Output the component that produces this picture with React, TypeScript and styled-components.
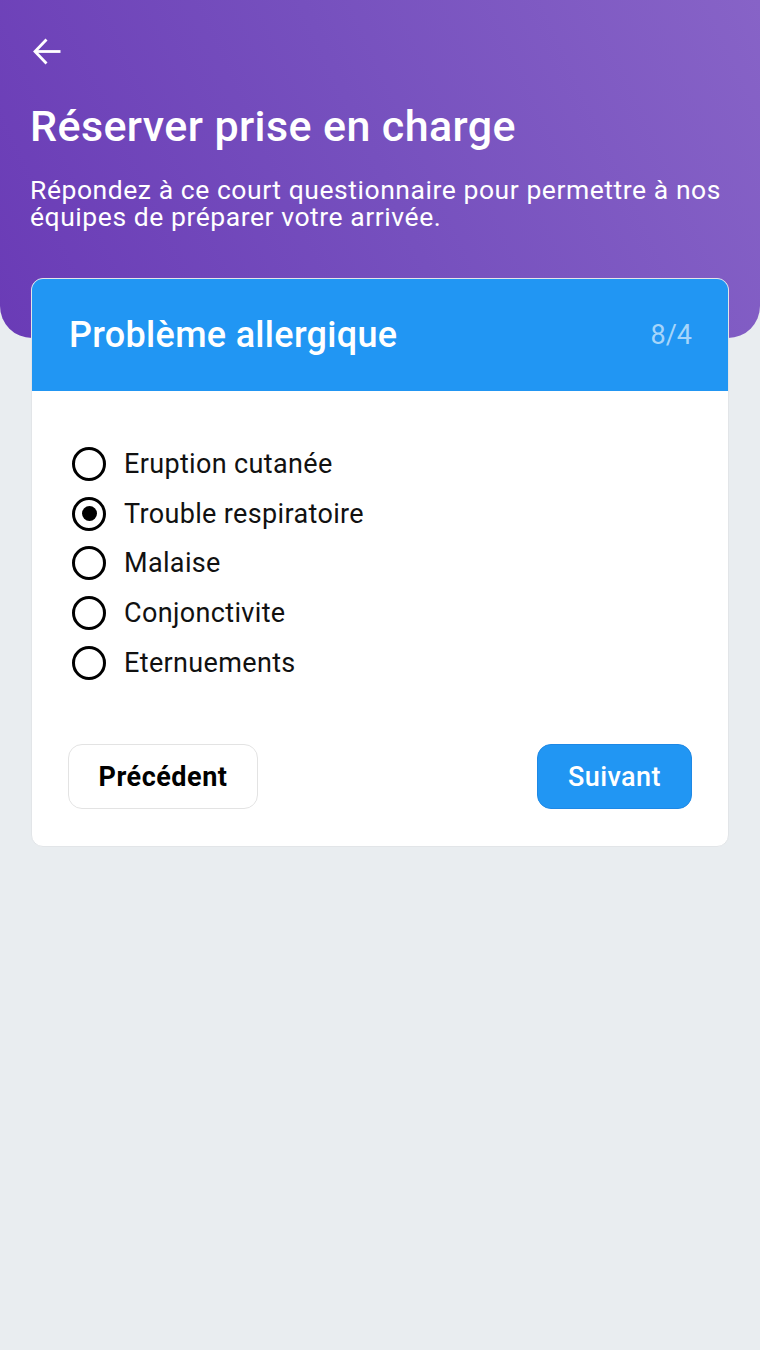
import styled, { createGlobalStyle } from 'styled-components';

const GlobalStyle = createGlobalStyle`
  body {
    margin: 0;
    background: #e9edf0;
    font-family: Roboto, "Noto Sans", sans-serif;
  }
  * {
    box-sizing: border-box;
  }
`

const options = [
  'Eruption cutanée',
  'Trouble respiratoire',
  'Malaise',
  'Conjonctivite',
  'Eternuements',
]

export default function App() {
  const selected = 1

  return (
    <>
      <GlobalStyle />
      <Page>
        <Header>
          <BackButton aria-label="Retour">
            <svg width="28" height="27" viewBox="0 0 28 27" fill="none">
              <polyline points="13.5,1.5 2,13.5 13.5,25.5" stroke="#fff" strokeWidth="2.8" />
              <line x1="2.5" y1="13.5" x2="27.5" y2="13.5" stroke="#fff" strokeWidth="2.8" />
            </svg>
          </BackButton>
          <Title>Réserver prise en charge</Title>
          <Subtitle>
            Répondez à ce court questionnaire pour permettre à nos équipes de préparer votre arrivée.
          </Subtitle>
        </Header>

        <Card>
          <CardHeader>
            <CardTitle>Problème allergique</CardTitle>
            <Step>8/4</Step>
          </CardHeader>
          <CardBody>
            <OptionList>
              {
                options.map((label, index) => {
                  return (
                    <OptionRow key={index}>
                      <Radio $checked={index === selected} />
                      <OptionLabel>{label}</OptionLabel>
                    </OptionRow>
                  )
                })
              }
            </OptionList>
            <Actions>
              <SecondaryButton>Précédent</SecondaryButton>
              <PrimaryButton>Suivant</PrimaryButton>
            </Actions>
          </CardBody>
        </Card>
      </Page>
    </>
  )
}

const Page = styled.div`
  min-height: 1350px;
  background: #e9edf0;
`

const Header = styled.header`
  height: 338px;
  padding: 38px 30px 0;
  border-radius: 0 0 32px 32px;
  background: linear-gradient(65deg, #6a3bb6 0%, #7650be 50%, #8763c7 100%);
  color: #fff;
`

const BackButton = styled.button`
  display: block;
  margin: 0 0 0 3px;
  padding: 0;
  border: none;
  background: none;
  height: 27px;
  cursor: pointer;

  svg {
    display: block;
  }
`

const Title = styled.h1`
  margin: 36px 0 0;
  font-size: 43px;
  line-height: 50px;
  font-weight: 500;
  letter-spacing: 0.4px;
`

const Subtitle = styled.p`
  margin: 25px 0 0;
  font-size: 26.5px;
  line-height: 27px;
  font-weight: 400;
  letter-spacing: 0.55px;
`

const Card = styled.section`
  margin: -60px 31px 0;
  background: #fff;
  border: 1px solid #e2e5e8;
  border-radius: 12px;
  overflow: hidden;
`

const CardHeader = styled.div`
  display: flex;
  align-items: center;
  justify-content: space-between;
  height: 112px;
  padding: 0 36px 0 37px;
  background: #2196f3;
`

const CardTitle = styled.h2`
  margin: 0;
  color: #fff;
  font-size: 36px;
  font-weight: 500;
  letter-spacing: 0.3px;
`

const Step = styled.span`
  color: #a6d5fa;
  font-size: 27px;
  font-weight: 400;
`

const CardBody = styled.div`
  padding: 48px 36px 37px;
`

const OptionList = styled.div`
  display: flex;
  flex-direction: column;
  padding-left: 4px;
`

const OptionRow = styled.label`
  display: flex;
  align-items: center;
  gap: 18px;
  height: 49.75px;
`

const Radio = styled.span<{ $checked: boolean }>`
  position: relative;
  width: 34px;
  height: 34px;
  border: 3px solid #000;
  border-radius: 50%;
  flex-shrink: 0;

  &::after {
    content: '';
    display: ${props => props.$checked ? 'block' : 'none'};
    position: absolute;
    top: 6.5px;
    left: 6.5px;
    width: 15px;
    height: 15px;
    border-radius: 50%;
    background: #000;
  }
`

const OptionLabel = styled.span`
  font-size: 27px;
  letter-spacing: 0.35px;
  color: #111;
`

const Actions = styled.div`
  display: flex;
  justify-content: space-between;
  margin-top: 56px;
`

const ButtonBase = styled.button`
  height: 65px;
  padding: 2px 0 0;
  border-radius: 14px;
  font-family: Roboto, "Noto Sans", sans-serif;
  font-size: 27px;
  cursor: pointer;
`

const SecondaryButton = styled(ButtonBase)`
  width: 190px;
  background: #fff;
  border: 1.5px solid #e3e3e3;
  color: #000;
  font-weight: 700;
  letter-spacing: 0.5px;
`

const PrimaryButton = styled(ButtonBase)`
  width: 155px;
  background: #2196f3;
  border: 1px solid #1e88e5;
  color: #fff;
  font-weight: 500;
  letter-spacing: 0.4px;
`
